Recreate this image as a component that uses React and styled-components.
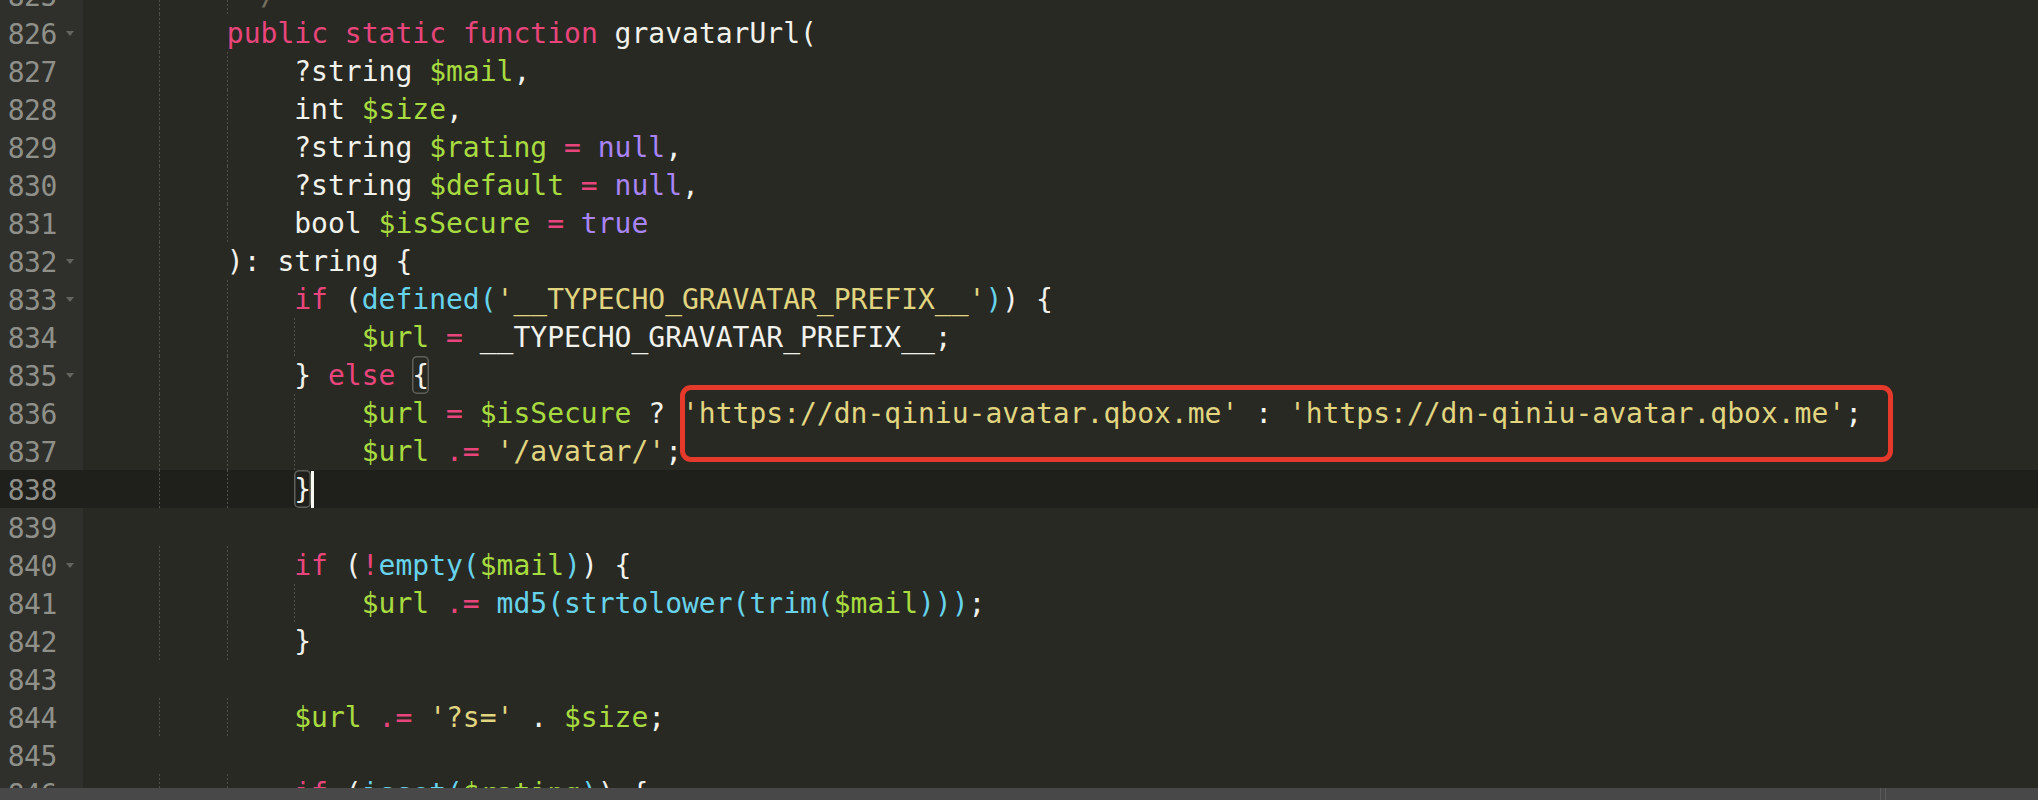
import React from "react";
import styled, { createGlobalStyle } from "styled-components";

const GlobalStyle = createGlobalStyle`
  html, body {
    margin: 0;
    padding: 0;
    background: #282923;
  }
`;

const colors = {
  kw: "#e9457c",
  var: "#a8db3f",
  num: "#a884f6",
  str: "#e1d580",
  fn: "#67d3eb",
  p: "#f2f2ec",
  comment: "#75715e",
};

const lines = [
  { n: 825, indent: 9, tokens: [["comment", "*/"]] },
  {
    n: 826,
    indent: 8,
    fold: true,
    tokens: [
      ["kw", "public"],
      ["p", " "],
      ["kw", "static"],
      ["p", " "],
      ["kw", "function"],
      ["p", " gravatarUrl("],
    ],
  },
  { n: 827, indent: 12, tokens: [["p", "?string "], ["var", "$mail"], ["p", ","]] },
  { n: 828, indent: 12, tokens: [["p", "int "], ["var", "$size"], ["p", ","]] },
  {
    n: 829,
    indent: 12,
    tokens: [["p", "?string "], ["var", "$rating"], ["p", " "], ["kw", "="], ["p", " "], ["num", "null"], ["p", ","]],
  },
  {
    n: 830,
    indent: 12,
    tokens: [["p", "?string "], ["var", "$default"], ["p", " "], ["kw", "="], ["p", " "], ["num", "null"], ["p", ","]],
  },
  {
    n: 831,
    indent: 12,
    tokens: [["p", "bool "], ["var", "$isSecure"], ["p", " "], ["kw", "="], ["p", " "], ["num", "true"]],
  },
  { n: 832, indent: 8, fold: true, tokens: [["p", "): string {"]] },
  {
    n: 833,
    indent: 12,
    fold: true,
    tokens: [
      ["kw", "if"],
      ["p", " ("],
      ["fn", "defined("],
      ["str", "'__TYPECHO_GRAVATAR_PREFIX__'"],
      ["fn", ")"],
      ["p", ") {"],
    ],
  },
  {
    n: 834,
    indent: 16,
    tokens: [["var", "$url"], ["p", " "], ["kw", "="], ["p", " __TYPECHO_GRAVATAR_PREFIX__;"]],
  },
  { n: 835, indent: 12, fold: true, tokens: [["p", "} "], ["kw", "else"], ["p", " "], ["match", "{"]] },
  {
    n: 836,
    indent: 16,
    tokens: [
      ["var", "$url"],
      ["p", " "],
      ["kw", "="],
      ["p", " "],
      ["var", "$isSecure"],
      ["p", " ? "],
      ["str", "'https://dn-qiniu-avatar.qbox.me'"],
      ["p", " : "],
      ["str", "'https://dn-qiniu-avatar.qbox.me'"],
      ["p", ";"],
    ],
  },
  {
    n: 837,
    indent: 16,
    tokens: [["var", "$url"], ["p", " "], ["kw", ".="], ["p", " "], ["str", "'/avatar/'"], ["p", ";"]],
  },
  { n: 838, indent: 12, current: true, tokens: [["match", "}"], ["caret", ""]] },
  { n: 839, indent: 0, tokens: [] },
  {
    n: 840,
    indent: 12,
    fold: true,
    tokens: [
      ["kw", "if"],
      ["p", " ("],
      ["kw", "!"],
      ["fn", "empty("],
      ["var", "$mail"],
      ["fn", ")"],
      ["p", ") {"],
    ],
  },
  {
    n: 841,
    indent: 16,
    tokens: [
      ["var", "$url"],
      ["p", " "],
      ["kw", ".="],
      ["p", " "],
      ["fn", "md5(strtolower(trim("],
      ["var", "$mail"],
      ["fn", ")))"],
      ["p", ";"],
    ],
  },
  { n: 842, indent: 12, tokens: [["p", "}"]] },
  { n: 843, indent: 0, tokens: [] },
  {
    n: 844,
    indent: 12,
    tokens: [
      ["var", "$url"],
      ["p", " "],
      ["kw", ".="],
      ["p", " "],
      ["str", "'?s='"],
      ["p", " . "],
      ["var", "$size"],
      ["p", ";"],
    ],
  },
  { n: 845, indent: 0, tokens: [] },
  {
    n: 846,
    indent: 12,
    fold: true,
    tokens: [
      ["kw", "if"],
      ["p", " ("],
      ["fn", "isset("],
      ["var", "$rating"],
      ["fn", ")"],
      ["p", ") {"],
    ],
  },
];

function indentChunks(indent) {
  const chunks = [];
  for (let c = 0; c < indent; c += 4) {
    chunks.push({ width: Math.min(4, indent - c), guide: c > 0 });
  }
  return chunks;
}

function App() {
  return (
    <>
      <GlobalStyle />
      <Window>
        <Editor>
          <Lines>
            {lines.map((line) => (
              <Row key={line.n} $current={line.current}>
                <Gutter $current={line.current}>
                  <LineNumber>{line.n}</LineNumber>
                  <FoldSlot>{line.fold && <FoldArrow />}</FoldSlot>
                </Gutter>
                <Code>
                  {indentChunks(line.indent).map((chunk, i) => (
                    <Indent key={i} $cols={chunk.width} $guide={chunk.guide} />
                  ))}
                  {line.tokens.map(([kind, text], i) => {
                    if (kind === "caret") return <Caret key={i} />;
                    if (kind === "match") return <Match key={i}>{text}</Match>;
                    return (
                      <Token key={i} $kind={kind}>
                        {text}
                      </Token>
                    );
                  })}
                </Code>
              </Row>
            ))}
          </Lines>
          <Highlight />
        </Editor>
        <ScrollBar>
          <ScrollTrack />
          <Grip />
        </ScrollBar>
      </Window>
    </>
  );
}

const Window = styled.div`
  width: 100%;
  height: 800px;
  display: flex;
  flex-direction: column;
  overflow: hidden;
  background: #282923;
  font-family: "DejaVu Sans Mono", "Liberation Mono", monospace;
  font-size: 28px;
`;

const Editor = styled.div`
  position: relative;
  flex: 1;
  overflow: hidden;
`;

const Lines = styled.div`
  display: flex;
  flex-direction: column;
  margin-top: -24px;
`;

const Row = styled.div`
  display: flex;
  height: 38px;
  background: ${(p) => (p.$current ? "#1f201c" : "transparent")};
`;

const Gutter = styled.div`
  width: 83px;
  flex-shrink: 0;
  display: flex;
  align-items: center;
  justify-content: flex-end;
  background: ${(p) => (p.$current ? "#1f201c" : "#2f302b")};
`;

const LineNumber = styled.span`
  color: #8f908a;
  line-height: 38px;
  padding-top: 3px;
  letter-spacing: -0.4px;
`;

const FoldSlot = styled.span`
  width: 26px;
  height: 38px;
  display: flex;
  align-items: center;
  padding-left: 9px;
  box-sizing: border-box;
`;

const FoldArrow = styled.span`
  width: 0;
  height: 0;
  border-left: 4.5px solid transparent;
  border-right: 4.5px solid transparent;
  border-top: 5px solid #64655f;
`;

const Code = styled.div`
  padding-left: 9px;
  padding-top: 2px;
  height: 38px;
  box-sizing: border-box;
  white-space: pre;
  line-height: 36px;
  display: flex;
  align-items: stretch;
`;

const Indent = styled.span`
  display: inline-block;
  width: ${(p) => p.$cols}ch;
  margin-top: -2px;
  height: 38px;
  background-image: ${(p) =>
    p.$guide ? "linear-gradient(to bottom, #4f504a 50%, transparent 50%)" : "none"};
  background-size: 1px 4px;
  background-repeat: repeat-y;
  background-position: 0 0;
`;

const Token = styled.span`
  color: ${(p) => colors[p.$kind]};
`;

const Match = styled.span`
  display: inline-block;
  color: ${colors.p};
  margin-top: -2px;
  height: 38px;
  padding-top: 2px;
  box-sizing: border-box;
  border-radius: 5px;
  box-shadow: inset 0 0 0 1.5px #5f605a;
`;

const Caret = styled.span`
  display: inline-block;
  width: 3px;
  height: 37px;
  margin-top: -1px;
  background: #f8f8f2;
`;

const Highlight = styled.div`
  position: absolute;
  left: 680px;
  top: 385px;
  width: 1213px;
  height: 77px;
  box-sizing: border-box;
  border: 5px solid #e5392b;
  border-radius: 11px;
  pointer-events: none;
`;

const ScrollBar = styled.div`
  height: 12px;
  flex-shrink: 0;
  display: flex;
  background: #484848;
`;

const ScrollTrack = styled.div`
  width: 1880px;
`;

const Grip = styled.div`
  width: 4px;
  border-left: 1px solid #5a5a5a;
  border-right: 1px solid #5a5a5a;
`;

export default App;
